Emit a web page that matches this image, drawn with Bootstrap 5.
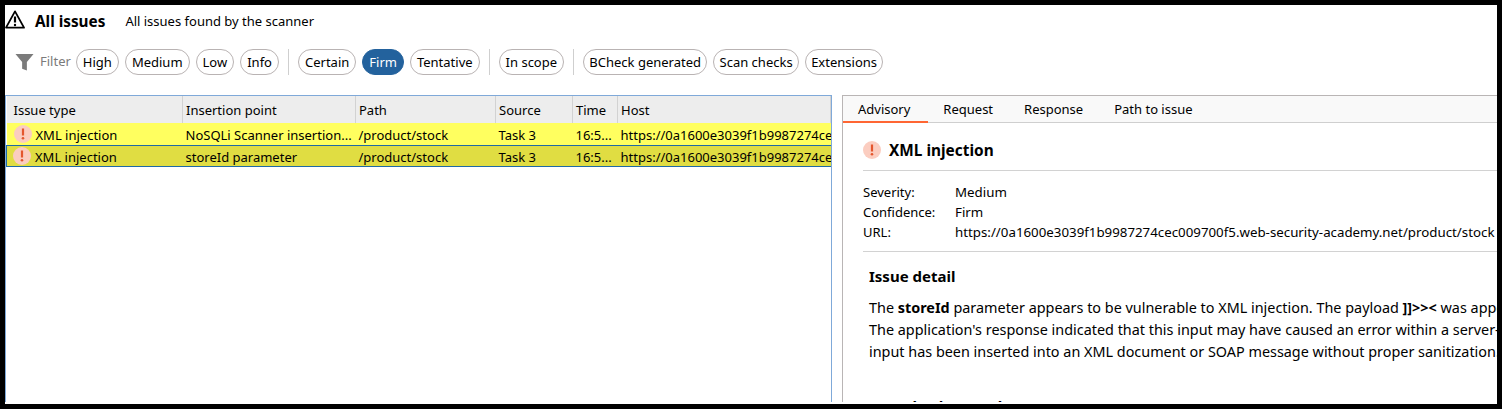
<!DOCTYPE html>
<html lang="en">
<head>
  <meta charset="UTF-8" />
  <meta name="viewport" content="width=device-width, initial-scale=1.0"/>
  <title>All issues</title>
  <link href="https://cdn.jsdelivr.net/npm/bootstrap@5.3.3/dist/css/bootstrap.min.css" rel="stylesheet"/>
  <style>
    html, body {
      height: 100%;
      overflow: hidden;
    }
    body {
      background-color: #000;
      font-family: 'Noto Sans', 'Open Sans', sans-serif;
      font-size: 13px;
      color: #000;
      padding: 5px;
    }
    .app-frame {
      background-color: #fff;
      width: 1492px;
      height: 399px;
      overflow: hidden;
    }
    .title-bar {
      height: 33px;
    }
    .title-icon {
      margin-top: -4px;
    }
    .title-text {
      font-size: 15.3px;
      font-weight: 700;
      margin-left: 10px;
    }
    .title-sub {
      margin-left: 20px;
      margin-top: 1px;
      font-size: 13px;
    }
    .filter-bar {
      height: 57px;
      padding-left: 10px;
      padding-bottom: 10px;
      gap: 6px;
    }
    .filter-label {
      color: #7b7b7b;
      margin-right: -1px;
    }
    .pill {
      border: 1px solid #b9b3b3;
      border-radius: 13px;
      height: 26px;
      line-height: 24px;
      padding: 0 6px;
      background: #fff;
      white-space: nowrap;
    }
    .pill-tight {
      padding: 0 5.25px;
    }
    .pill-on {
      background-color: #23629d;
      border-color: #23629d;
      color: #fff;
    }
    .bar-sep {
      width: 1px;
      height: 26px;
      background: #cfcfcf;
      margin: 0 3px;
    }
    .panes {
      height: 307px;
    }
    .issue-pane {
      width: 827px;
      border: 1px solid #7fa9d9;
      border-bottom: 0;
      overflow: hidden;
    }
    .issue-grid {
      table-layout: fixed;
      width: 825px;
      border-collapse: collapse;
    }
    .issue-grid th {
      background: #ededed;
      font-weight: 400;
      height: 27px;
      padding: 2px 3px 0;
      border-right: 1px solid #d2d2d2;
      white-space: nowrap;
      overflow: hidden;
    }
    .issue-grid td {
      padding: 3px 3px 0;
      line-height: 18px;
      white-space: nowrap;
      overflow: hidden;
      height: 22px;
      background: #ffff5f;
    }
    .issue-grid .row-sel td {
      padding-top: 2px;
      height: 21px;
      background: #e0dd42;
      border-top: 1px solid #1f6aa5;
      border-bottom: 1px solid #1f6aa5;
    }
    .issue-grid .row-sel td:first-child {
      border-left: 1px solid #1f6aa5;
    }
    .issue-grid th.cell-type {
      padding-left: 7px;
    }
    .issue-grid td.cell-type {
      padding-left: 7px;
      padding-top: 0;
    }
    .issue-grid .row-sel td.cell-type {
      padding-left: 6px;
    }
    .cell-type span {
      padding-top: 2px;
    }
    .sev-dot {
      flex: none;
    }
    .detail-pane {
      margin-left: 10px;
      width: 655px;
      border-left: 1px solid #b9b5b5;
      border-top: 1px solid #b9b5b5;
      overflow: hidden;
    }
    .tab-strip {
      height: 27px;
      background: #f9f9f9;
      border-bottom: 1px solid #cfcfcf;
    }
    .tab-item {
      padding: 0 16px 0 15px;
      height: 27px;
      line-height: 26px;
    }
    .tab-on {
      padding-right: 18px;
      border-bottom: 2px solid #ff6633;
    }
    .advisory {
      padding: 0 0 0 20px;
      white-space: nowrap;
      font-size: 13.3px;
    }
    .advisory-head {
      height: 48px;
      padding-top: 7px;
      border-bottom: 1px solid #d2d2d2;
    }
    .advisory-title {
      font-size: 15.4px;
      font-weight: 700;
      margin-left: 8px;
      padding-top: 2px;
    }
    .meta-block {
      padding: 11px 0 9px;
      border-bottom: 1px solid #d2d2d2;
    }
    .meta-row {
      height: 20px;
      line-height: 20px;
    }
    .meta-key {
      width: 92px;
      font-size: 13px;
    }
    .advisory-body {
      padding-left: 6px;
    }
    .advisory-h {
      font-size: 15px;
      font-weight: 700;
      margin: 14px 0 11px;
      line-height: 20px;
    }
    .advisory-p {
      line-height: 22px;
      margin: 0 0 33px;
      font-size: 14.4px;
    }
  </style>
</head>
<body>

<div class="app-frame d-flex flex-column">
  <div class="title-bar d-flex align-items-center">
    <svg class="title-icon" width="20" height="20" viewBox="0 0 20 20" fill="none">
      <path d="M10 1.4 L19 17.6 H1 Z" stroke="#000" stroke-width="1.8" stroke-linejoin="round"/>
      <path d="M10 6.5v6" stroke="#000" stroke-width="2.2"/>
      <circle cx="10" cy="15" r="1.2" fill="#000"/>
    </svg>
    <span class="title-text">All issues</span>
    <span class="title-sub">All issues found by the scanner</span>
  </div>

  <div class="filter-bar d-flex align-items-center">
    <svg width="19" height="20" viewBox="0 0 20 20">
      <path d="M0.5 1.5 H19.5 L12.5 10 V19 L7.5 17 V10 Z" fill="#7b7b7b"/>
    </svg>
    <span class="filter-label">Filter</span>
    <span class="pill">High</span>
    <span class="pill">Medium</span>
    <span class="pill">Low</span>
    <span class="pill">Info</span>
    <span class="bar-sep"></span>
    <span class="pill">Certain</span>
    <span class="pill pill-on">Firm</span>
    <span class="pill">Tentative</span>
    <span class="bar-sep"></span>
    <span class="pill">In scope</span>
    <span class="bar-sep"></span>
    <span class="pill pill-tight">BCheck generated</span>
    <span class="pill pill-tight">Scan checks</span>
    <span class="pill pill-tight">Extensions</span>
  </div>

  <div class="panes d-flex">
    <div class="issue-pane">
      <table class="issue-grid">
        <colgroup>
          <col style="width:176px"><col style="width:173px"><col style="width:140px"><col style="width:77px"><col style="width:45px"><col>
        </colgroup>
        <thead>
          <tr>
            <th class="cell-type">Issue type</th>
            <th>Insertion point</th>
            <th>Path</th>
            <th>Source</th>
            <th>Time</th>
            <th>Host</th>
          </tr>
        </thead>
        <tbody>
          <tr>
            <td class="cell-type">
              <div class="d-flex align-items-center gap-1">
                <svg class="sev-dot" width="18" height="18" viewBox="0 0 18 18"><circle cx="9" cy="9" r="9" fill="#fbcdc0"/><path d="M9 3.5v7" stroke="#e4572e" stroke-width="2.2"/><circle cx="9" cy="13.3" r="1.3" fill="#e4572e"/></svg>
                <span>XML injection</span>
              </div>
            </td>
            <td>NoSQLi Scanner insertion...</td>
            <td>/product/stock</td>
            <td>Task 3</td>
            <td>16:5...</td>
            <td>https://0a1600e3039f1b9987274cec009700f5.web-security-academy.net</td>
          </tr>
          <tr class="row-sel">
            <td class="cell-type">
              <div class="d-flex align-items-center gap-1">
                <svg class="sev-dot" width="18" height="18" viewBox="0 0 18 18"><circle cx="9" cy="9" r="9" fill="#fbcdc0"/><path d="M9 3.5v7" stroke="#e4572e" stroke-width="2.2"/><circle cx="9" cy="13.3" r="1.3" fill="#e4572e"/></svg>
                <span>XML injection</span>
              </div>
            </td>
            <td>storeId parameter</td>
            <td>/product/stock</td>
            <td>Task 3</td>
            <td>16:5...</td>
            <td>https://0a1600e3039f1b9987274cec009700f5.web-security-academy.net</td>
          </tr>
        </tbody>
      </table>
    </div>

    <div class="detail-pane">
      <div class="tab-strip d-flex">
        <div class="tab-item tab-on">Advisory</div>
        <div class="tab-item">Request</div>
        <div class="tab-item">Response</div>
        <div class="tab-item">Path to issue</div>
      </div>
      <div class="advisory">
        <div class="advisory-head d-flex align-items-center">
          <svg width="18" height="18" viewBox="0 0 18 18"><circle cx="9" cy="9" r="9" fill="#fbcdc0"/><path d="M9 3.5v7" stroke="#e4572e" stroke-width="2.2"/><circle cx="9" cy="13.3" r="1.3" fill="#e4572e"/></svg>
          <span class="advisory-title">XML injection</span>
        </div>
        <div class="meta-block">
          <div class="meta-row d-flex"><span class="meta-key">Severity:</span><span>Medium</span></div>
          <div class="meta-row d-flex"><span class="meta-key">Confidence:</span><span>Firm</span></div>
          <div class="meta-row d-flex"><span class="meta-key">URL:</span><span>https://0a1600e3039f1b9987274cec009700f5.web-security-academy.net/product/stock</span></div>
        </div>
        <div class="advisory-body">
          <div class="advisory-h">Issue detail</div>
          <p class="advisory-p">The <b>storeId</b> parameter appears to be vulnerable to XML injection. The payload <b>]]&gt;&gt;&lt;</b> was appended to the value.<br>The application's response indicated that this input may have caused an error within a server-side XML processor.<br>input has been inserted into an XML document or SOAP message without proper sanitization.</p>
          <div class="advisory-h">Issue background</div>
        </div>
      </div>
    </div>
  </div>
</div>

<script src="https://cdn.jsdelivr.net/npm/bootstrap@5.3.3/dist/js/bootstrap.bundle.min.js"></script>
</body>
</html>
